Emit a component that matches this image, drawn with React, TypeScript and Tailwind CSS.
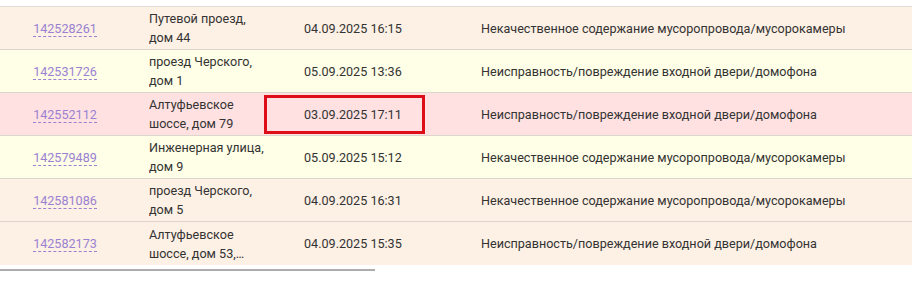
import React from "react";

type Row = {
  id: string;
  address: string;
  date: string;
  problem: string;
  bg: string;
  marked?: boolean;
};

const rows: Row[] = [
  {
    id: "142528261",
    address: "Путевой проезд, дом 44",
    date: "04.09.2025 16:15",
    problem: "Некачественное содержание мусоропровода/мусорокамеры",
    bg: "bg-[#fdf0e4]",
  },
  {
    id: "142531726",
    address: "проезд Черского, дом 1",
    date: "05.09.2025 13:36",
    problem: "Неисправность/повреждение входной двери/домофона",
    bg: "bg-[#fffee6]",
  },
  {
    id: "142552112",
    address: "Алтуфьевское шоссе, дом 79",
    date: "03.09.2025 17:11",
    problem: "Неисправность/повреждение входной двери/домофона",
    bg: "bg-[#ffe1e1]",
    marked: true,
  },
  {
    id: "142579489",
    address: "Инженерная улица, дом 9",
    date: "05.09.2025 15:12",
    problem: "Некачественное содержание мусоропровода/мусорокамеры",
    bg: "bg-[#fffee6]",
  },
  {
    id: "142581086",
    address: "проезд Черского, дом 5",
    date: "04.09.2025 16:31",
    problem: "Некачественное содержание мусоропровода/мусорокамеры",
    bg: "bg-[#fdf0e4]",
  },
  {
    id: "142582173",
    address: "Алтуфьевское шоссе, дом 53, корпус 2",
    date: "04.09.2025 15:35",
    problem: "Неисправность/повреждение входной двери/домофона",
    bg: "bg-[#fdf0e4]",
  },
];

const App: React.FC = () => {
  return (
    <div className="w-[912px] h-[283px] bg-white pt-[6px] font-['Roboto',sans-serif] text-[12.6px] leading-[19px] text-[#333]">
      <div className="border-t border-[#e2ddd8]">
        {rows.map((r) => (
          <div
            key={r.id}
            className={`flex items-center h-[43px] border-b border-[#ddd6cc] last:border-b-0 ${r.bg}`}
          >
            <div className="w-[130px] shrink-0 text-center">
              <span className="text-[#9a82d2] border-b border-dashed border-[#9a82d2]">
                {r.id}
              </span>
            </div>
            <div className="w-[134px] shrink-0 pl-[19px]">
              <div className="w-[120px] line-clamp-2">{r.address}</div>
            </div>
            <div className="relative w-[201px] shrink-0 h-full flex items-center pl-[40px]">
              {r.marked && (
                <div className="absolute left-0 top-[2px] bottom-[1px] w-[161px] border-[3px] border-[#dd0e17]" />
              )}
              {r.date}
            </div>
            <div className="pl-[16px]">{r.problem}</div>
          </div>
        ))}
      </div>
      <div className="mt-[4px] w-[375px] h-[2px] bg-[#adadb0]" />
    </div>
  );
};

export default App;
